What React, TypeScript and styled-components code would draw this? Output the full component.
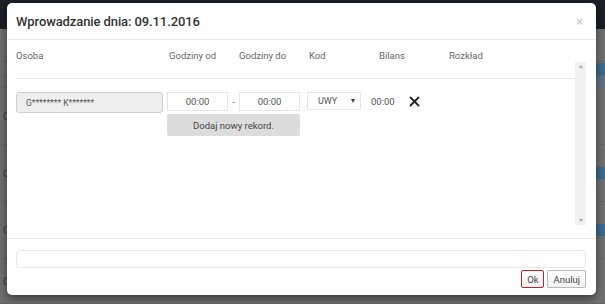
import React from "react";
import styled, { createGlobalStyle } from "styled-components";

const Global = createGlobalStyle`
  html, body { margin: 0; padding: 0; }
  body { font-family: Roboto, "Liberation Sans", sans-serif; width: 605px; height: 304px; overflow: hidden; }
  * { box-sizing: border-box; }
`;

const Page = styled.div`
  position: relative;
  width: 605px;
  height: 304px;
  background: #6f6f6f;
  display: flex;
  flex-direction: column;
  overflow: hidden;
`;

const TopBar = styled.div`
  height: 29px;
  background: #1b1f28;
  flex: none;
`;

const BgRow = styled.div<{ $h: number }>`
  height: ${(p) => p.$h}px;
  flex: none;
  display: flex;
  justify-content: space-between;
  align-items: center;
  border-bottom: 1px solid #666;
  padding: 0 0 0 3px;
  color: #3d3d3d;
  font-size: 11px;
`;

const BgStripe = styled.div<{ $c: string }>`
  width: 12px;
  height: 12px;
  background: ${(p) => p.$c};
`;

const Modal = styled.div`
  position: absolute;
  left: 7px;
  top: 3px;
  width: 589px;
  height: 292px;
  background: #fff;
  border-radius: 5px;
  box-shadow: 0 3px 8px rgba(0, 0, 0, 0.5);
  display: flex;
  flex-direction: column;
`;

const Header = styled.div`
  height: 37px;
  flex: none;
  display: flex;
  align-items: center;
  justify-content: space-between;
  padding: 0 13px 0 9px;
  border-bottom: 1px solid #e8e8e8;
`;

const Title = styled.div`
  font-size: 13px;
  font-weight: 500;
  color: #333;
  letter-spacing: -0.1px;
`;

const Close = styled.div`
  font-size: 13px;
  color: #c8c8c8;
  line-height: 1;
`;

const Body = styled.div`
  flex: none;
  padding: 8px 10px 13px 9px;
  display: flex;
  flex-direction: column;
`;

const HeadRow = styled.div`
  display: grid;
  grid-template-columns: 151px 70px 70px 70px 70px 70px;
  height: 14px;
  align-items: center;
  font-size: 9.5px;
  color: #666;
`;

const HeadCell = styled.div<{ $pad?: number }>`
  padding-left: ${(p) => p.$pad ?? 2}px;
`;

const ScrollWrap = styled.div`
  display: flex;
  height: 163px;
`;

const Main = styled.div`
  flex: 1;
  display: flex;
  flex-direction: column;
`;

const Divider = styled.div`
  margin-top: 16px;
  height: 1px;
  background: #e8e8e8;
`;

const Row = styled.div`
  margin-top: 13px;
  display: flex;
  align-items: flex-start;
`;

const NameField = styled.div`
  width: 147px;
  height: 21px;
  background: #eeeeee;
  border: 1px solid #d0d0d0;
  border-radius: 3px;
  font-size: 8.5px;
  color: #555;
  padding-left: 9px;
  display: flex;
  align-items: center;
`;

const TimeBlock = styled.div`
  margin-left: 4px;
  width: 133px;
  display: flex;
  flex-direction: column;
  gap: 3px;
`;

const TimeLine = styled.div`
  display: flex;
  align-items: center;
`;

const TimeInput = styled.div`
  width: 61px;
  height: 19px;
  border: 1px solid #e6e6e6;
  font-size: 9.5px;
  color: #555;
  display: flex;
  align-items: center;
  justify-content: center;
`;

const Dash = styled.div`
  width: 11px;
  text-align: center;
  font-size: 9.5px;
  color: #777;
`;

const AddButton = styled.div`
  height: 22px;
  background: #dcdcdc;
  border-radius: 2px;
  font-size: 9.5px;
  color: #444;
  display: flex;
  align-items: center;
  justify-content: center;
`;

const Select = styled.div`
  margin-left: 7px;
  width: 54px;
  height: 18px;
  border: 1px solid #e6e6e6;
  font-size: 9px;
  color: #555;
  display: flex;
  align-items: center;
  justify-content: space-between;
  padding: 0 5px 0 10px;
`;

const Caret = styled.span`
  width: 0;
  height: 0;
  border-left: 2.5px solid transparent;
  border-right: 2.5px solid transparent;
  border-top: 4px solid #444;
`;

const Balance = styled.div`
  margin-left: 10px;
  height: 18px;
  display: flex;
  align-items: center;
  font-size: 9.5px;
  color: #555;
`;

const Remove = styled.div`
  margin-left: 14px;
  height: 18px;
  display: flex;
  align-items: center;
`;

const Scrollbar = styled.div`
  width: 11px;
  background: #f1f1f1;
  display: flex;
  flex-direction: column;
  justify-content: space-between;
  align-items: center;
  padding: 3px 0;
`;

const Arrow = styled.span<{ $down?: boolean }>`
  width: 0;
  height: 0;
  border-left: 2px solid transparent;
  border-right: 2px solid transparent;
  ${(p) =>
    p.$down ? "border-top: 3px solid #a8a8a8;" : "border-bottom: 3px solid #a8a8a8;"}
`;

const Footer = styled.div`
  border-top: 1px solid #eaeaea;
  padding: 11px 10px 0 9px;
  display: flex;
  flex-direction: column;
  align-items: stretch;
`;

const NoteInput = styled.div`
  height: 18px;
  border: 1px solid #e8e8e8;
  border-radius: 3px;
`;

const Buttons = styled.div`
  margin-top: 2px;
  display: flex;
  justify-content: flex-end;
  gap: 3px;
`;

const Btn = styled.div<{ $primary?: boolean }>`
  height: 18px;
  padding: 0 ${(p) => (p.$primary ? 5 : 5)}px;
  border: 1px solid ${(p) => (p.$primary ? "#c41e2a" : "#b9b9b9")};
  border-radius: 2px;
  background: linear-gradient(#fff, #f1f1f1);
  font-size: 9.5px;
  color: #444;
  display: flex;
  align-items: center;
`;

const bgRows: { h: number; c: string; letter?: string }[] = [
  { h: 33, c: "#6f6f6f" },
  { h: 14, c: "#3c6a8d" },
  { h: 12, c: "#5b7284" },
  { h: 57, c: "#6f6f6f", letter: "C" },
  { h: 57, c: "#3c6a8d", letter: "C" },
  { h: 57, c: "#3c6a8d", letter: "C" },
  { h: 45, c: "#6f6f6f", letter: "C" },
];

export default function App() {
  return (
    <>
      <Global />
      <Page>
        <TopBar />
        {bgRows.map((r, i) => (
          <BgRow key={i} $h={r.h}>
            <span>{r.letter ?? ""}</span>
            <BgStripe $c={r.c} />
          </BgRow>
        ))}
        <Modal>
          <Header>
            <Title>Wprowadzanie dnia: 09.11.2016</Title>
            <Close>×</Close>
          </Header>
          <Body>
            <HeadRow>
              <HeadCell $pad={0}>Osoba</HeadCell>
              <HeadCell>Godziny od</HeadCell>
              <HeadCell>Godziny do</HeadCell>
              <HeadCell>Kod</HeadCell>
              <HeadCell>Bilans</HeadCell>
              <HeadCell>Rozkład</HeadCell>
            </HeadRow>
            <ScrollWrap>
              <Main>
                <Divider />
                <Row>
                  <NameField>G******** K*******</NameField>
                  <TimeBlock>
                    <TimeLine>
                      <TimeInput>00:00</TimeInput>
                      <Dash>-</Dash>
                      <TimeInput>00:00</TimeInput>
                    </TimeLine>
                    <AddButton>Dodaj nowy rekord.</AddButton>
                  </TimeBlock>
                  <Select>
                    <span>UWY</span>
                    <Caret />
                  </Select>
                  <Balance>00:00</Balance>
                  <Remove>
                    <svg width="11" height="11" viewBox="0 0 11 11">
                      <path d="M1.5 1.5 L9.5 9.5 M9.5 1.5 L1.5 9.5" stroke="#222" strokeWidth="1.8" strokeLinecap="round" />
                    </svg>
                  </Remove>
                </Row>
              </Main>
              <Scrollbar>
                <Arrow />
                <Arrow $down />
              </Scrollbar>
            </ScrollWrap>
          </Body>
          <Footer>
            <NoteInput />
            <Buttons>
              <Btn $primary>Ok</Btn>
              <Btn>Anuluj</Btn>
            </Buttons>
          </Footer>
        </Modal>
      </Page>
    </>
  );
}
